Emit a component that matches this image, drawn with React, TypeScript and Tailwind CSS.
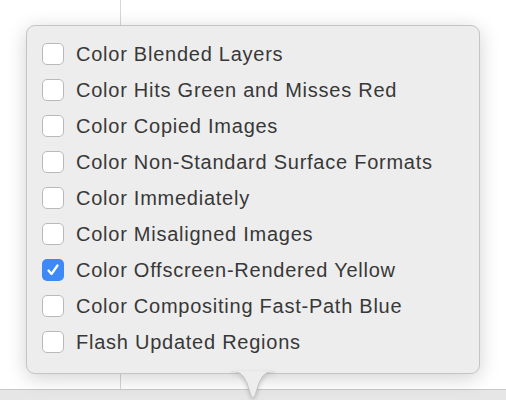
import React from "react";

const options = [
  { label: "Color Blended Layers", checked: false },
  { label: "Color Hits Green and Misses Red", checked: false },
  { label: "Color Copied Images", checked: false },
  { label: "Color Non-Standard Surface Formats", checked: false },
  { label: "Color Immediately", checked: false },
  { label: "Color Misaligned Images", checked: false },
  { label: "Color Offscreen-Rendered Yellow", checked: true },
  { label: "Color Compositing Fast-Path Blue", checked: false },
  { label: "Flash Updated Regions", checked: false },
];

function Checkbox({ checked }: { checked: boolean }) {
  if (checked) {
    return (
      <span className="flex h-[22px] w-[22px] shrink-0 items-center justify-center rounded-[5px] bg-[#3d8af7]">
        <svg width="14" height="14" viewBox="0 0 14 14" fill="none">
          <path
            d="M2.5 7.5 L5.5 11 L11.5 2.5"
            stroke="white"
            strokeWidth="2.3"
            strokeLinecap="round"
            strokeLinejoin="round"
          />
        </svg>
      </span>
    );
  }
  return (
    <span className="h-[22px] w-[22px] shrink-0 rounded-[5px] border border-[#b9b9b9] bg-white" />
  );
}

export default function App() {
  return (
    <div className="relative flex h-[400px] w-[506px] flex-col overflow-hidden bg-white font-['Liberation_Sans',Arial,sans-serif]">
      <div className="flex flex-1">
        <div className="w-[120px]" />
        <div className="w-px bg-[#d6d6d6]" />
      </div>
      <div className="h-[11px] border-t border-[#c9c9c9] bg-[#e6e6e6]" />

      <div className="absolute left-[26px] top-[25px] w-[454px]">
        <div className="relative rounded-[9px] border border-[#c4c4c4] bg-[#ededed] pb-[13px] pl-[15px] pt-[10px] shadow-[0_4px_20px_rgba(0,0,0,0.18)]">
          <ul className="flex flex-col">
            {options.map((opt, i) => (
              <li key={i} className="flex h-[36px] items-center gap-[12px]">
                <Checkbox checked={opt.checked} />
                <span className="text-[20px] tracking-[0.75px] text-[#383838]">
                  {opt.label}
                </span>
              </li>
            ))}
          </ul>
        </div>
        <svg
          className="absolute left-[205px] top-[346px] drop-shadow-[0_2px_2px_rgba(0,0,0,0.18)]"
          width="44"
          height="28"
          viewBox="0 0 44 28"
        >
          <path
            d="M0 0.5 C10 0.5 12 4 16 12 L20 24.5 C21 27 23 27 24 24.5 L28 12 C32 4 34 0.5 44 0.5 Z"
            fill="#ededed"
          />
          <path
            d="M0 0.5 C10 0.5 12 4 16 12 L20 24.5 C21 27 23 27 24 24.5 L28 12 C32 4 34 0.5 44 0.5"
            fill="none"
            stroke="#c4c4c4"
            strokeWidth="1"
          />
          <rect x="0" y="-1" width="44" height="1.6" fill="#ededed" />
        </svg>
      </div>
    </div>
  );
}
